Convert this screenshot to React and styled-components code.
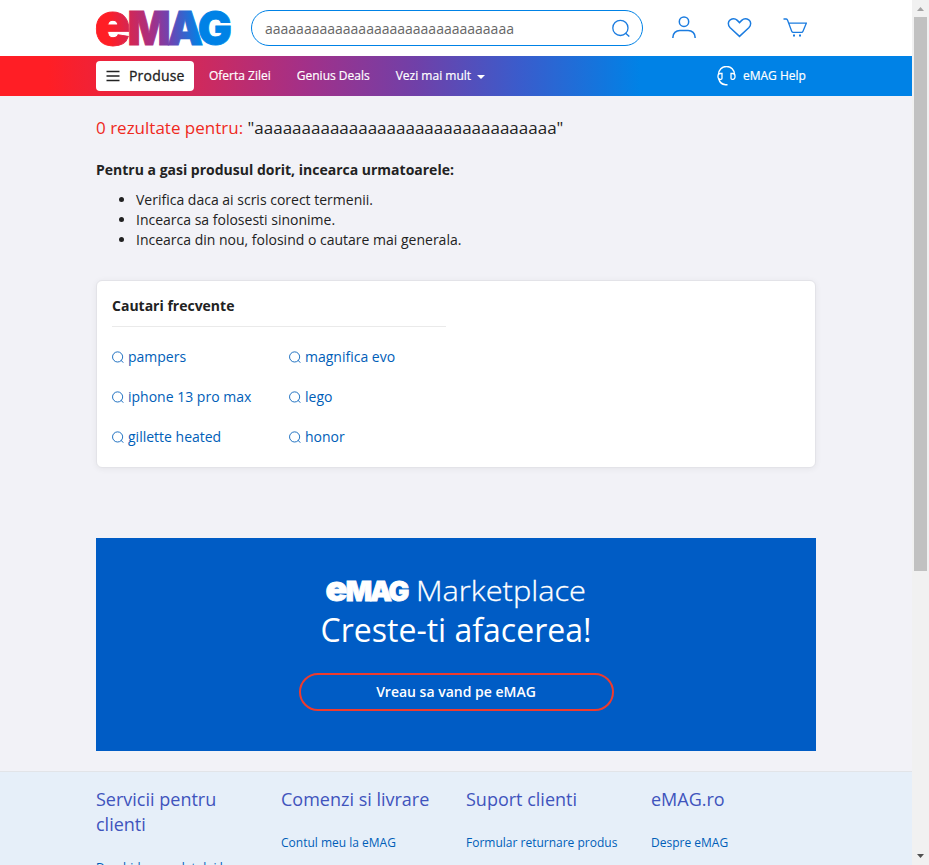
import React from "react";
import styled, { createGlobalStyle } from "styled-components";

const GlobalStyle = createGlobalStyle`
  * { box-sizing: border-box; }
  body { margin: 0; overflow: hidden; font-family: "Open Sans", sans-serif; font-size: 14px; line-height: 20px; color: #222; }
  a { color: inherit; text-decoration: none; }
`;

const Viewport = styled.div`
  display: flex;
  width: 929px;
  height: 865px;
  overflow: hidden;
  background: #f2f2f7;
`;
const Page = styled.div`
  width: 912px;
  height: 865px;
  overflow: hidden;
`;
const ScrollTrack = styled.div`
  width: 17px;
  display: flex;
  flex-direction: column;
  align-items: center;
  justify-content: space-between;
  background: #f1f1f1;
`;
const ScrollThumb = styled.div`
  width: 13px;
  height: 554px;
  margin-bottom: 277px;
  background: #c1c1c1;
`;
const ScrollArrow = styled.svg`
  display: block;
  width: 17px;
  height: 17px;
`;
const Container = styled.div`
  width: 720px;
  margin: 0 auto;
`;

const Header = styled.header`
  height: 56px;
  background: #fff;
`;
const HeaderRow = styled(Container)`
  display: flex;
  align-items: flex-start;
  padding-top: 10px;
`;
const Logo = styled.svg`
  display: block;
  width: 136px;
  height: 37px;
  overflow: visible;
  font-family: Inter, sans-serif;
  font-weight: 900;
`;
const SearchBox = styled.div`
  display: flex;
  align-items: center;
  justify-content: space-between;
  width: 392px;
  height: 36px;
  margin-left: 19px;
  padding: 0 12px 0 13px;
  border: 1px solid #0082e6;
  border-radius: 18px;
  color: #1b7ce0;
`;
const SearchValue = styled.span`
  padding-top: 1px;
  color: #666;
`;
const Icon = styled.svg`
  display: block;
  flex: none;
  width: ${(p) => p.$w}px;
  height: ${(p) => p.$h || p.$w}px;
  fill: none;
  stroke: currentColor;
  stroke-width: ${(p) => p.$stroke || 1.5};
`;
const HeaderActions = styled.div`
  display: flex;
  align-items: center;
  gap: 31px;
  height: 36px;
  margin-left: 29px;
  color: #1b7ce0;
`;

const Nav = styled.nav`
  height: 40px;
  background: linear-gradient(90deg, #ff1e25 0, #ff1e25 48px, #d2295a 192px, #a33088 304px, #7040a8 416px, #3a5ccc 520px, #0082e6 640px);
`;
const NavRow = styled(Container)`
  display: flex;
  align-items: center;
  height: 40px;
  color: #fff;
  font-size: 12px;
`;
const ProductsButton = styled.a`
  display: flex;
  align-items: center;
  gap: 9px;
  width: 98px;
  height: 30px;
  padding-left: 10px;
  border-radius: 4px;
  background: #fff;
  color: #222;
  font-size: 14px;
  -webkit-text-stroke: 0.3px currentColor;
  letter-spacing: 0.2px;
`;
const NavLink = styled.a`
  display: flex;
  align-items: center;
  gap: ${(p) => p.$gap || 0}px;
  margin-left: ${(p) => p.$left}px;
  -webkit-text-stroke: 0.2px currentColor;
`;
const HelpLink = styled.a`
  display: flex;
  align-items: center;
  gap: 7px;
  width: 99px;
  margin-left: auto;
  white-space: nowrap;
  -webkit-text-stroke: 0.2px currentColor;
`;
const Caret = styled.span`
  border: 4px solid transparent;
  border-top-color: #fff;
  border-bottom: 0;
  margin-top: 2px;
`;

const Title = styled.h1`
  margin: 0;
  padding-top: 20px;
  font-size: 17px;
  line-height: 24px;
  font-weight: 400;
`;
const Accent = styled.span`
  color: #ef2a1e;
`;
const Subtitle = styled.p`
  margin: 20px 0 10px;
  font-weight: 700;
`;
const Tips = styled.ul`
  margin: 0;
  padding-left: 40px;
`;
const Card = styled.section`
  height: 188px;
  margin-top: 30px;
  padding: 15px;
  border: 1px solid #e3e3e8;
  border-radius: 6px;
  background: #fff;
  box-shadow: 0 1px 6px rgba(0, 0, 0, 0.06);
`;
const CardTitle = styled.h2`
  width: 334px;
  height: 31px;
  margin: 0 0 20px;
  border-bottom: 1px solid #eaeaea;
  font-size: 14px;
  line-height: 20px;
  font-weight: 700;
`;
const SearchGrid = styled.div`
  display: grid;
  grid-template-columns: 177px 177px;
  row-gap: 20px;
  color: #005eb8;
`;
const SearchLink = styled.a`
  display: flex;
  align-items: center;
  gap: 4px;
`;

const Banner = styled.section`
  display: flex;
  flex-direction: column;
  align-items: center;
  height: 213px;
  margin-top: 70px;
  background: #005cc5;
  color: #fff;
`;
const MarketLogo = styled.svg`
  display: block;
  width: 260px;
  height: 32px;
  margin-top: 38px;
  overflow: visible;
  fill: #fff;
`;
const BannerTitle = styled.div`
  margin-top: 1px;
  font-size: 32px;
  line-height: 42px;
  font-weight: 400;
`;
const BannerButton = styled.a`
  width: 315px;
  height: 38px;
  margin: 22px 0 0 1px;
  padding-right: 1px;
  border: 2px solid #ef3b2d;
  border-radius: 19px;
  line-height: 34px;
  text-align: center;
  font-weight: 600;
`;

const Footer = styled.footer`
  height: 96px;
  margin-top: 20px;
  border-top: 1px solid #e2e4e8;
  background: #e6eff9;
`;
const FooterColumns = styled(Container)`
  display: grid;
  grid-template-columns: repeat(4, 155px);
  column-gap: 30px;
  padding-top: 15px;
`;
const FooterTitle = styled.h3`
  margin: 0 0 20px;
  color: #4054bd;
  font-size: 18px;
  line-height: 25px;
  font-weight: 400;
`;
const FooterLink = styled.a`
  display: block;
  color: #005eb8;
  font-size: 12px;
  line-height: 18px;
  padding-top: 2px;
`;

const Wordmark = () => (
  <text>
    <tspan x="-1.5" y="34.8" fontSize="60" textLength="36" lengthAdjust="spacingAndGlyphs">e</tspan>
    <tspan x="31.5" y="34.8" fontSize="47" textLength="101" lengthAdjust="spacingAndGlyphs" letterSpacing="-3.5">MAG</tspan>
  </text>
);

const SearchIcon = ({ size, stroke }) => (
  <Icon $w={size} $stroke={stroke} viewBox="0 0 18 18">
    <circle cx="8.4" cy="8.9" r="7.6" />
    <path d="M13.4 14 17.3 17.6" />
  </Icon>
);

const SEARCHES = ["pampers", "magnifica evo", "iphone 13 pro max", "lego", "gillette heated", "honor"];
const FOOTER = [
  ["Servicii pentru clienti", "Deschiderea coletului la livrare"],
  ["Comenzi si livrare", "Contul meu la eMAG"],
  ["Suport clienti", "Formular returnare produs"],
  ["eMAG.ro", "Despre eMAG"],
];

export default function App() {
  return (
    <Viewport>
      <GlobalStyle />
      <Page>
        <Header>
          <HeaderRow>
            <Logo viewBox="0 0 136 37">
              <defs>
                <linearGradient id="brand" gradientUnits="userSpaceOnUse" x1="0" y1="24" x2="135" y2="12">
                  <stop offset="0.1" stopColor="#ff1e25" />
                  <stop offset="0.42" stopColor="#a33088" />
                  <stop offset="0.55" stopColor="#6a45b4" />
                  <stop offset="0.76" stopColor="#0082e6" />
                </linearGradient>
              </defs>
              <g fill="url(#brand)" stroke="url(#brand)" strokeWidth="0.8">
                <Wordmark />
              </g>
            </Logo>
            <SearchBox>
              <SearchValue>aaaaaaaaaaaaaaaaaaaaaaaaaaaaaaaa</SearchValue>
              <SearchIcon size={18} stroke={1.3} />
            </SearchBox>
            <HeaderActions>
              <Icon $w={24} viewBox="0 0 24 24">
                <circle cx="12" cy="5.7" r="4.7" />
                <path d="M.9 22v-.8c0-3.9 3-6.8 7-6.8h8.2c4 0 7 2.9 7 6.8v.8" />
              </Icon>
              <Icon $w={25} $h={24} viewBox="0 0 25 24">
                <path d="M12.5 20.4 3.2 11.7C.5 8.9.9 5.5 3.2 3.9c2.3-1.6 5.3-1.3 7.1.5l2.2 2.2L14.7 4.4c1.8-1.8 4.8-2.1 7.1-.5 2.3 1.6 2.7 5 0 7.8z" />
              </Icon>
              <Icon $w={24} viewBox="0 0 24 24" $stroke={1.3}>
                <path d="M.5 3h2.8c.8 0 1 .5 1.3 1.3L8.7 15.2c.3.8.7 1.2 1.5 1.2h8.3c.8 0 1.2-.4 1.5-1.2L23.3 7.2H5.6" />
                <path d="M10 19.5h2M16 19.5h2" strokeWidth="2" />
              </Icon>
            </HeaderActions>
          </HeaderRow>
        </Header>
        <Nav>
          <NavRow>
            <ProductsButton>
              <Icon $w={14} viewBox="0 0 14 14">
                <path d="M.5 2.5h13M.5 7h13M.5 11.5h13" />
              </Icon>
              Produse
            </ProductsButton>
            <NavLink $left={15}>Oferta Zilei</NavLink>
            <NavLink $left={26}>Genius Deals</NavLink>
            <NavLink $left={26} $gap={6}>Vezi mai mult<Caret /></NavLink>
            <HelpLink>
              <Icon $w={19} $h={20} viewBox="0 0 19 20">
                <path d="M1.5 8.5A8 8 0 0 1 17.5 8.5M1.7 12.5C2.5 16 5 18.4 8.5 18.7h2" />
                <path d="M5 7.5H3C.3 7.5.3 13.3 3 13.3h.9c.7 0 1.1-.4 1.1-1.1zM14 7.5h2c2.7 0 2.7 5.8 0 5.8h-.9c-.7 0-1.1-.4-1.1-1.1z" strokeWidth="1.3" />
              </Icon>
              eMAG Help
            </HelpLink>
          </NavRow>
        </Nav>
        <Container>
          <Title>
            <Accent>0 rezultate pentru:</Accent> "aaaaaaaaaaaaaaaaaaaaaaaaaaaaaaaa"
          </Title>
          <Subtitle>Pentru a gasi produsul dorit, incearca urmatoarele:</Subtitle>
          <Tips>
            <li>Verifica daca ai scris corect termenii.</li>
            <li>Incearca sa folosesti sinonime.</li>
            <li>Incearca din nou, folosind o cautare mai generala.</li>
          </Tips>
          <Card>
            <CardTitle>Cautari frecvente</CardTitle>
            <SearchGrid>
              {SEARCHES.map((s) => (
                <SearchLink key={s}>
                  <SearchIcon size={12} stroke={1.3} />
                  {s}
                </SearchLink>
              ))}
            </SearchGrid>
          </Card>
          <Banner>
            <MarketLogo viewBox="0 0 260 32">
              <g transform="translate(0.5 5) scale(.61 .58)" stroke="#fff" strokeWidth="1.5" fontFamily="Inter" fontWeight="900">
                <Wordmark />
              </g>
              <text x="90" y="25" fontFamily="Open Sans, sans-serif" fontWeight="300" fontSize="28" textLength="170" lengthAdjust="spacingAndGlyphs" stroke="#fff" strokeWidth="0.3">Marketplace</text>
            </MarketLogo>
            <BannerTitle>Creste-ti afacerea!</BannerTitle>
            <BannerButton>Vreau sa vand pe eMAG</BannerButton>
          </Banner>
        </Container>
        <Footer>
          <FooterColumns>
            {FOOTER.map(([title, link]) => (
              <div key={title}>
                <FooterTitle>{title}</FooterTitle>
                <FooterLink>{link}</FooterLink>
              </div>
            ))}
          </FooterColumns>
        </Footer>
      </Page>
      <ScrollTrack>
        <ScrollArrow viewBox="0 0 17 17"><path d="M5 11h7L8.5 7z" fill="#a3a3a3" /></ScrollArrow>
        <ScrollThumb />
        <ScrollArrow viewBox="0 0 17 17"><path d="M5 6h7L8.5 10z" fill="#505050" /></ScrollArrow>
      </ScrollTrack>
    </Viewport>
  );
}
